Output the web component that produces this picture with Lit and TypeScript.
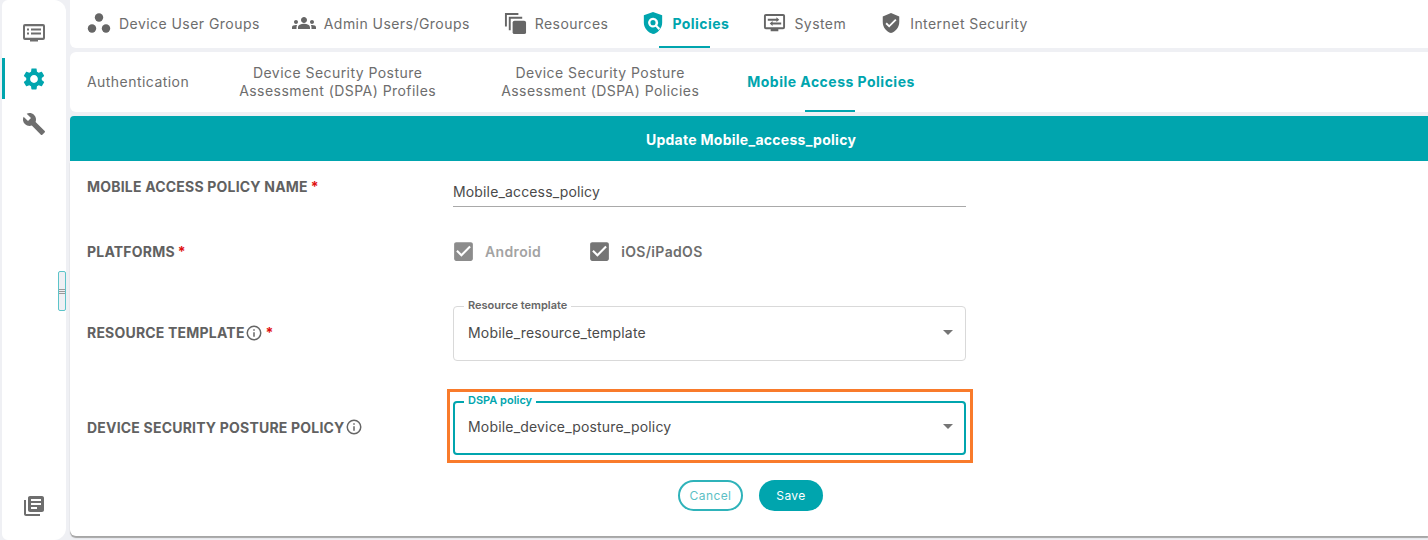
import { LitElement, html, css, svg } from "lit";
import { customElement } from "lit/decorators.js";

const ICONS = {
  monitor: svg`<path d="M3 2h18a2 2 0 0 1 2 2v12a2 2 0 0 1-2 2h-5v1.5H8V18H3a2 2 0 0 1-2-2V4a2 2 0 0 1 2-2zm0 2.2v11.6h18V4.2H3z"/><path d="M5 6.500h2v2H5zM9 6.500h10v2H9zM5 10.500h2v2H5zM9 10.500h10v2H9z"/>`,
  system: svg`<path d="M3 2h18a2 2 0 0 1 2 2v12a2 2 0 0 1-2 2h-5v2H8v-2H3a2 2 0 0 1-2-2V4a2 2 0 0 1 2-2zm0 2.2v11.6h18V4.2H3z"/><path d="M5 7h9V5.500L17 8l-3 2.500V9H5zM19 11h-9V9.500L7 12l3 2.500V13h9z"/>`,
  settings: svg`<path d="M19.14 12.94c.04-.3.06-.61.06-.94 0-.32-.02-.64-.07-.94l2.03-1.58c.18-.14.23-.41.12-.61l-1.92-3.32c-.12-.22-.37-.29-.59-.22l-2.39.96c-.5-.38-1.03-.7-1.62-.94l-.36-2.54c-.04-.24-.24-.41-.48-.41h-3.84c-.24 0-.43.17-.47.41l-.36 2.54c-.59.24-1.13.57-1.62.94l-2.39-.96c-.22-.08-.47 0-.59.22L2.74 8.87c-.12.21-.08.47.12.61l2.03 1.58c-.05.3-.09.63-.09.94s.02.64.07.94l-2.03 1.58c-.18.14-.23.41-.12.61l1.92 3.32c.12.22.37.29.59.22l2.39-.96c.5.38 1.03.7 1.62.94l.36 2.54c.05.24.24.41.48.41h3.84c.24 0 .44-.17.47-.41l.36-2.54c.59-.24 1.13-.56 1.62-.94l2.39.96c.22.08.47 0 .59-.22l1.92-3.32c.12-.22.07-.47-.12-.61l-2.01-1.58zM12 15.6c-1.98 0-3.6-1.62-3.6-3.6s1.62-3.6 3.6-3.6 3.6 1.62 3.6 3.6-1.62 3.6-3.6 3.6z"/>`,
  build: svg`<path d="M22.7 19l-9.1-9.1c.9-2.3.4-5-1.5-6.9-2-2-5-2.4-7.4-1.3L9 6 6 9 1.6 4.7C.4 7.1.9 10.1 2.9 12.1c1.9 1.9 4.6 2.4 6.9 1.5l9.1 9.1c.4.4 1 .4 1.4 0l2.3-2.3c.5-.4.5-1.1.1-1.4z"/>`,
  books: svg`<path d="M4 6H2v14c0 1.1.9 2 2 2h14v-2H4V6zm16-4H8c-1.1 0-2 .9-2 2v12c0 1.1.9 2 2 2h12c1.1 0 2-.9 2-2V4c0-1.1-.9-2-2-2zm-1 9H9V9h10v2zm-4 4H9v-2h6v2zm4-8H9V5h10v2z"/>`,
  dots: svg`<circle cx="12" cy="6.500" r="4.200"/><circle cx="5" cy="17.500" r="4.200"/><circle cx="19" cy="17.500" r="4.200"/>`,
  groups: svg`<path d="M12 12.75c1.63 0 3.07.39 4.24.9 1.08.48 1.76 1.56 1.76 2.73V18H6v-1.61c0-1.18.68-2.26 1.76-2.73 1.17-.52 2.61-.91 4.24-.91zM4 13c1.1 0 2-.9 2-2s-.9-2-2-2-2 .9-2 2 .9 2 2 2zm1.13 1.1c-.37-.06-.74-.1-1.13-.1-.99 0-1.93.21-2.78.58C.48 14.9 0 15.62 0 16.43V18h4.500v-1.61c0-.83.23-1.61.63-2.29zM20 13c1.1 0 2-.9 2-2s-.9-2-2-2-2 .9-2 2 .9 2 2 2zm4 3.43c0-.81-.48-1.53-1.22-1.85-.85-.37-1.79-.58-2.78-.58-.39 0-.76.04-1.13.1.4.68.63 1.46.63 2.29V18H24v-1.57zM12 6c1.66 0 3 1.34 3 3s-1.34 3-3 3-3-1.34-3-3 1.34-3 3-3z"/>`,
  resources: svg`<path d="M1 1h14v2H3v12H1z"/><path d="M5 5h14v2H7v12H5z"/><rect x="9" y="9" width="14" height="14" rx="2"/>`,
  shieldSearch: svg`<path fill-rule="evenodd" d="M12 0l10 3.600v8.200c0 5.600-4.200 10.400-8.200 12l-1.800.2C6.600 22.600 2 17.600 2 11.800V3.600zm0 6.200a5.400 5.400 0 1 0 2.900 10l3.200 3.300 1.700-1.800-3.100-3.100A5.400 5.400 0 0 0 12 6.200zm0 2.600a2.800 2.800 0 1 1 0 5.600 2.800 2.800 0 0 1 0-5.600z"/>`,
  shieldCheck: svg`<path d="M12 1L3 5v6c0 5.55 3.84 10.74 9 12 5.16-1.26 9-6.45 9-12V5l-9-4zm-2 16l-4-4 1.41-1.41L10 14.17l6.59-6.59L18 9l-8 8z"/>`,
  checkbox: svg`<path d="M19 3H5c-1.11 0-2 .9-2 2v14c0 1.1.89 2 2 2h14c1.11 0 2-.9 2-2V5c0-1.1-.89-2-2-2zm-9 14l-5-5 1.41-1.41L10 14.17l7.59-7.59L19 8l-9 9z"/>`,
  info: svg`<path d="M12 2a10 10 0 1 0 0 20 10 10 0 0 0 0-20zm0 18a8 8 0 1 1 0-16 8 8 0 0 1 0 16zm-1-9h2v6h-2zm0-4h2v2h-2z"/>`,
};

const icon = (name: keyof typeof ICONS, size: number) =>
  html`<svg class="icon" width=${size} height=${size} viewBox="0 0 24 24">${ICONS[name]}</svg>`;

const TOP_TABS: [keyof typeof ICONS, string, number, boolean][] = [
  ["dots", "Device User Groups", 24, false],
  ["groups", "Admin Users/Groups", 24, false],
  ["resources", "Resources", 23, false],
  ["shieldSearch", "Policies", 22, true],
  ["system", "System", 23, false],
  ["shieldCheck", "Internet Security", 22, false],
];

@customElement("app-root")
export class AppRoot extends LitElement {
  static styles = css`
    :host {
      display: grid;
      grid-template-columns: 64px 1fr;
      column-gap: 4px;
      height: 540px;
      padding-left: 2px;
      box-sizing: border-box;
      overflow: hidden;
      position: relative;
      background: #eff0f4;
      font-family: Inter, "Liberation Sans", sans-serif;
      font-size: 14px;
      color: #6d6d6d;
    }
    .icon {
      fill: currentColor;
      flex: none;
      display: block;
    }
    .side {
      background: #fff;
      border-radius: 6px 12px 12px 6px;
      display: flex;
      flex-direction: column;
      align-items: center;
      padding-top: 11px;
      color: #6e6e6e;
    }
    .side-item {
      height: 45px;
      width: 100%;
      display: flex;
      align-items: center;
      justify-content: center;
      position: relative;
    }
    .side-item.active {
      color: #00a5ae;
    }
    .side-item.active::before {
      content: "";
      position: absolute;
      left: 0;
      top: 2px;
      bottom: 2px;
      width: 3px;
      background: #00a5ae;
    }
    .side-bottom {
      margin-top: auto;
      margin-bottom: 12px;
    }
    .handle {
      position: absolute;
      left: 58px;
      top: 271px;
      width: 8px;
      height: 40px;
      box-sizing: border-box;
      border: 1px solid #5cc4c9;
      border-radius: 2px;
      background: #eff0f4;
      display: flex;
      flex-direction: column;
      justify-content: center;
      gap: 1px;
    }
    .handle i {
      display: block;
      height: 1px;
      background: #9a9a9a;
    }
    .main {
      display: flex;
      flex-direction: column;
      min-width: 0;
    }
    .top {
      height: 48px;
      box-sizing: border-box;
      background: #fff;
      border-radius: 0 0 0 6px;
      display: flex;
      align-items: stretch;
      gap: 34px;
      padding-left: 17px;
      margin-bottom: 4px;
    }
    .top-tab {
      display: flex;
      align-items: center;
      gap: 8px;
      padding-bottom: 2px;
      position: relative;
      letter-spacing: 0.45px;
      white-space: nowrap;
    }
    .top-tab:first-child {
      margin-right: -2px;
    }
    .top-tab svg {
      color: #666;
    }
    .top-tab.active {
      color: #00a5ae;
      font-weight: 700;
      letter-spacing: 0.45px;
    }
    .top-tab.active svg {
      color: #00a5ae;
    }
    .top-tab.active::after {
      content: "";
      position: absolute;
      left: 17px;
      bottom: 0;
      width: 51px;
      height: 2px;
      background: #00a5ae;
    }
    .sub {
      height: 60px;
      background: #fff;
      border-radius: 6px 0 0 6px;
      display: flex;
      align-items: center;
      gap: 50px;
      padding-left: 17px;
      margin-bottom: 4px;
      letter-spacing: 0.45px;
      line-height: 18px;
      text-align: center;
    }
    .sub-tab.wide {
      margin-right: 15px;
    }
    .sub-tab.active {
      align-self: stretch;
      display: flex;
      align-items: center;
      position: relative;
      margin-left: -2px;
      color: #00a5ae;
      font-weight: 700;
      letter-spacing: 0.48px;
    }
    .sub-tab.active::after {
      content: "";
      position: absolute;
      left: 58px;
      bottom: 0;
      width: 50px;
      height: 2px;
      background: #00a5ae;
    }
    .banner {
      height: 45px;
      box-sizing: border-box;
      background: #00a5ae;
      color: #fff;
      font-weight: 700;
      letter-spacing: 0.27px;
      display: flex;
      align-items: center;
      justify-content: center;
      border-radius: 4px 0 0 0;
      padding: 1px 0 0 4px;
    }
    .form {
      height: 375px;
      box-sizing: border-box;
      background: #fff;
      border-radius: 0 0 0 6px;
      box-shadow: 0 2px 1px #a6a6a6;
      padding: 14px 0 0 17px;
    }
    .row {
      display: flex;
      align-items: center;
    }
    .label {
      width: 366px;
      flex: none;
      font-weight: 700;
      letter-spacing: 0.2px;
      color: #616161;
      display: flex;
      align-items: center;
      white-space: nowrap;
    }
    .label svg {
      color: #666;
    }
    .req {
      color: #e01010;
      margin-left: 3px;
    }
    .row-name {
      align-items: flex-start;
    }
    .row-name .label {
      line-height: 24px;
    }
    .input {
      width: 513px;
      height: 32px;
      box-sizing: border-box;
      border-bottom: 1px solid #a9a9a9;
      color: #4a4a4a;
      padding-top: 8px;
      line-height: 18px;
      letter-spacing: 0.15px;
    }
    .row-platforms {
      height: 30px;
      margin-top: 29px;
    }
    .check {
      display: flex;
      align-items: center;
      font-weight: 600;
      letter-spacing: 0.35px;
      gap: 9px;
      color: #6d6d6d;
      margin-left: -2px;
      margin-right: 48px;
    }
    .check svg {
      color: #757575;
    }
    .check.off {
      color: #a3a3a3;
    }
    .check.off svg {
      color: #8c8c8c;
    }
    .row-resource {
      margin-top: 40px;
    }
    .row-resource .label,
    .row-dspa .label {
      padding-bottom: 2px;
    }
    .row-dspa {
      margin-top: 40px;
    }
    .select {
      width: 513px;
      height: 55px;
      box-sizing: border-box;
      border: 1px solid #d9d9d9;
      border-radius: 4px;
      position: relative;
      display: flex;
      align-items: center;
      justify-content: space-between;
      padding: 0 12px 2px 14px;
      color: #4a4a4a;
      letter-spacing: 0.18px;
    }
    .select .float {
      position: absolute;
      left: 10px;
      top: -9px;
      padding: 0 4px;
      background: #fff;
      font-size: 11px;
      font-weight: 600;
      line-height: 14px;
      color: #666;
      letter-spacing: 0;
    }
    .caret {
      width: 0;
      height: 0;
      border-left: 5px solid transparent;
      border-right: 5px solid transparent;
      border-top: 5px solid #757575;
    }
    .select.focus {
      height: 54px;
      border: 2px solid #00a5ae;
      padding: 0 11px 3px 13px;
    }
    .select.focus .float {
      left: 9px;
      top: -10px;
      color: #00a5ae;
    }
    .select.focus::after {
      content: "";
      position: absolute;
      left: -8px;
      right: -9px;
      top: -14px;
      bottom: -10px;
      border: 3px solid #f97b2b;
      pointer-events: none;
    }
    .actions {
      display: flex;
      justify-content: center;
      gap: 16px;
      margin-top: 25px;
      padding-right: 14px;
    }
    .btn {
      height: 31px;
      box-sizing: border-box;
      border-radius: 16px;
      display: flex;
      align-items: center;
      justify-content: center;
      font-size: 12px;
      font-weight: 400;
      letter-spacing: 0.4px;
    }
    .btn.cancel {
      width: 65px;
      border: 2px solid #2fb3ba;
      color: #5cbfc5;
    }
    .btn.save {
      width: 64px;
      background: #00a5ae;
      color: #fff;
    }
  `;

  render() {
    return html`
      <nav class="side">
        <div class="side-item">${icon("monitor", 24)}</div>
        <div class="side-item active">${icon("settings", 26)}</div>
        <div class="side-item">${icon("build", 24)}</div>
        <div class="side-item side-bottom">${icon("books", 24)}</div>
      </nav>
      <div class="handle"><i></i><i></i><i></i></div>
      <div class="main">
        <div class="top">
          ${TOP_TABS.map(
            ([name, label, size, active]) => html`
              <div class="top-tab ${active ? "active" : ""}">
                ${icon(name, size)}<span>${label}</span>
              </div>
            `
          )}
        </div>
        <div class="sub">
          <div class="sub-tab">Authentication</div>
          <div class="sub-tab wide">Device Security Posture<br />Assessment (DSPA) Profiles</div>
          <div class="sub-tab">Device Security Posture<br />Assessment (DSPA) Policies</div>
          <div class="sub-tab active">Mobile Access Policies</div>
        </div>
        <div class="banner">Update Mobile_access_policy</div>
        <div class="form">
          <div class="row row-name">
            <div class="label">MOBILE ACCESS POLICY NAME<span class="req">*</span></div>
            <div class="input">Mobile_access_policy</div>
          </div>
          <div class="row row-platforms">
            <div class="label">PLATFORMS<span class="req">*</span></div>
            <div class="check off">${icon("checkbox", 25)}Android</div>
            <div class="check">${icon("checkbox", 25)}iOS/iPadOS</div>
          </div>
          <div class="row row-resource">
            <div class="label">RESOURCE TEMPLATE${icon("info", 18)}<span class="req">*</span></div>
            <div class="select">
              <span class="float">Resource template</span>
              <span>Mobile_resource_template</span>
              <span class="caret"></span>
            </div>
          </div>
          <div class="row row-dspa">
            <div class="label">DEVICE SECURITY POSTURE POLICY${icon("info", 18)}</div>
            <div class="select focus">
              <span class="float">DSPA policy</span>
              <span>Mobile_device_posture_policy</span>
              <span class="caret"></span>
            </div>
          </div>
          <div class="actions">
            <div class="btn cancel">Cancel</div>
            <div class="btn save">Save</div>
          </div>
        </div>
      </div>
    `;
  }
}

declare global {
  interface HTMLElementTagNameMap {
    "app-root": AppRoot;
  }
}
